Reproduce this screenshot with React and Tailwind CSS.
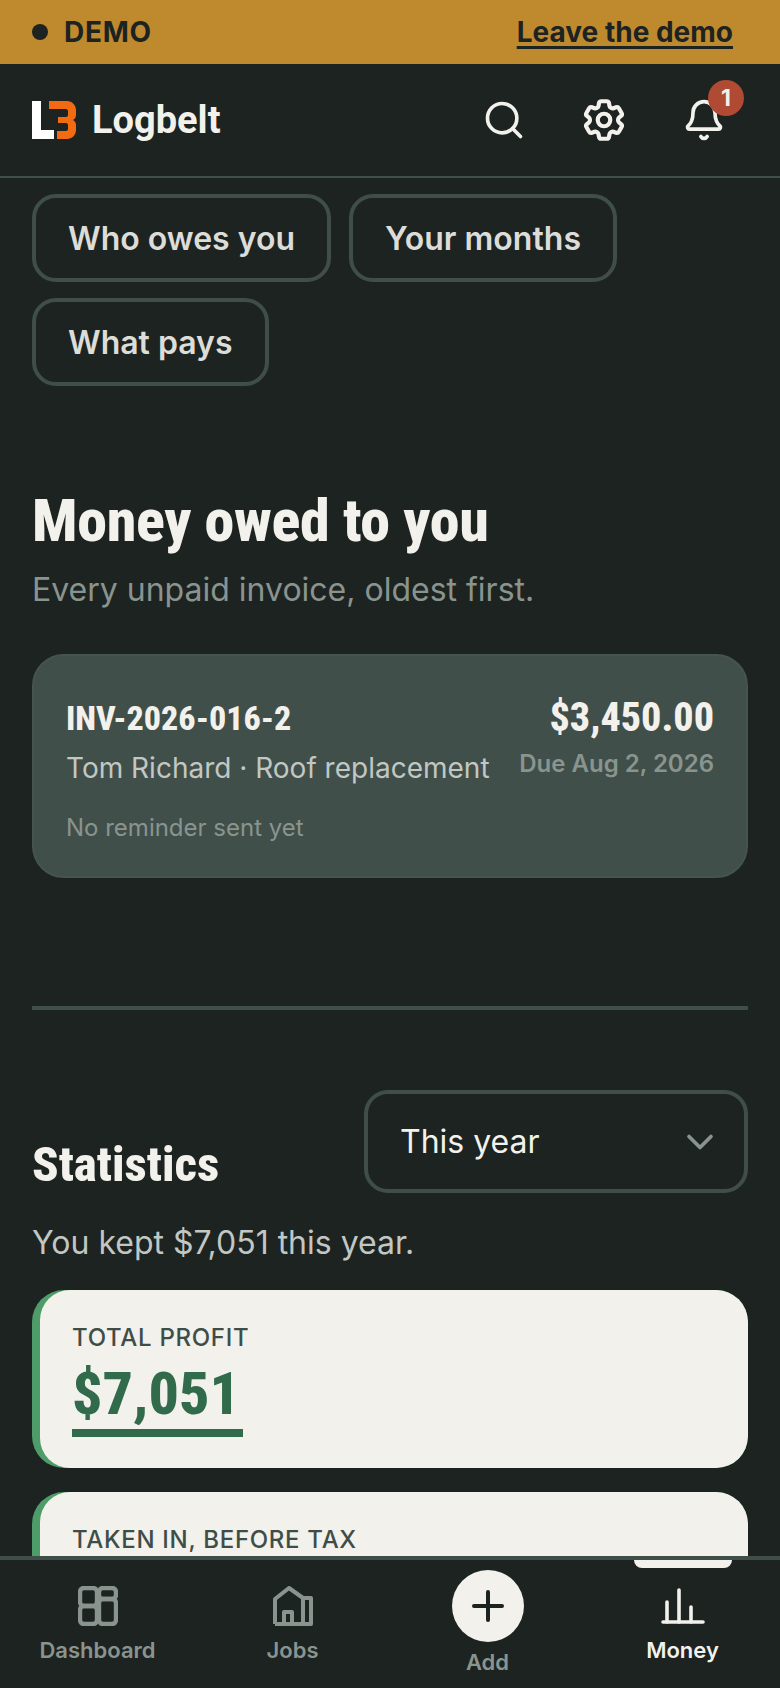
import React from "react";
import { Search, Bell, Plus, ChevronDown } from "lucide-react";
import { HiOutlineCog6Tooth } from "react-icons/hi2";

const head = { fontFamily: "Roboto, 'Liberation Sans', sans-serif", fontStretch: "85%" };

function Logo() {
  return (
    <svg width="44" height="38" viewBox="0 0 44 38" aria-hidden="true">
      <path d="M0 0h9v29h13v9H0z" fill="#fff" />
      <path d="M17 0h18c5 0 9 4 9 9v5c0 2-1 4-3 5 2 1 3 3 3 5v5c0 5-4 9-9 9H25v-8h9c1 0 2-1 2-2v-4c0-1-1-2-2-2h-8v-6h8c1 0 2-1 2-2V10c0-1-1-2-2-2H17z" fill="#f26a12" />
    </svg>
  );
}

function Chip({ children }) {
  return (
    <div className="h-[88px] px-[32px] pt-[2px] flex items-center rounded-[24px] border-4 border-[#3f4e49] text-[32px] font-semibold text-[#dcdcd8]">
      {children}
    </div>
  );
}

function DashIcon() {
  return (
    <svg width="40" height="40" viewBox="0 0 40 40" fill="none" stroke="#8a948f" strokeWidth="4.4" aria-hidden="true">
      <rect x="2" y="2" width="17" height="18" rx="4" />
      <rect x="21" y="2" width="17" height="11" rx="4" />
      <rect x="2" y="20" width="17" height="18" rx="4" />
      <rect x="21" y="13" width="17" height="25" rx="4" />
    </svg>
  );
}

function JobsIcon() {
  return (
    <svg width="40" height="40" viewBox="0 0 40 40" fill="none" stroke="#8a948f" strokeWidth="4" strokeLinejoin="round" aria-hidden="true">
      <path d="M2 38V13L16 2l14 10" />
      <path d="M2 38h36V12h-8v26" />
      <path d="M11 38V26h8v12" />
    </svg>
  );
}

function MoneyIcon() {
  return (
    <svg width="44" height="36" viewBox="0 0 44 36" fill="none" stroke="#f2f1ec" strokeWidth="3.6" strokeLinecap="round" aria-hidden="true">
      <path d="M2 34h40" />
      <path d="M6 14v20M18 2v32M30 19v15" />
    </svg>
  );
}

function NavItem({ icon, label, active }) {
  return (
    <div className="relative flex-1 flex flex-col items-center pt-[26px]">
      {active && <div className="absolute top-0 w-[98px] h-[8px] bg-[#f2f1ec] rounded-b-[10px]" />}
      <div className="h-[40px] flex items-center justify-center">{icon}</div>
      <div className={`mt-[8px] text-[22px] leading-[32px] font-semibold ${active ? "text-[#f2f1ec]" : "text-[#8a948f]"}`}>{label}</div>
    </div>
  );
}

function Stat({ label, children }) {
  return (
    <div className="rounded-[32px] bg-[#4f9c6b] pl-[8px] overflow-hidden">
      <div className="bg-[#f2f1ec] rounded-[30px] pl-[32px] pt-[32px] pb-[31px]">
        <div className="text-[24px] leading-[32px] font-medium tracking-[0.7px] text-[#3f4d48]">{label}</div>
        {children}
      </div>
    </div>
  );
}

export default function App() {
  return (
    <div className="w-[780px] h-[1688px] flex flex-col overflow-hidden bg-[#1d2321] text-[#f2f1ec]" style={{ fontFamily: "Inter, sans-serif" }}>
      <div className="h-[64px] shrink-0 bg-[#bf8a2e] pl-[32px] pr-[47px] flex items-center justify-between text-[#1d2321]">
        <div className="flex items-center gap-[16px] text-[28px] font-bold tracking-[0.7px]">
          <span className="w-[16px] h-[16px] rounded-full bg-[#1d2321]" />
          DEMO
        </div>
        <div className="text-[28px] font-bold underline underline-offset-[4px] decoration-[3px]">Leave the demo</div>
      </div>

      <header className="h-[114px] shrink-0 border-b-2 border-[#3f4e49] pl-[32px] pr-[54px] flex items-center justify-between">
        <div className="flex items-center gap-[16px]">
          <Logo />
          <span className="text-[38px] font-bold text-[#f2f1ec]" style={{ ...head, fontStretch: "93%" }}>Logbelt</span>
        </div>
        <div className="flex items-center gap-[53px]">
          <Search size={44} strokeWidth={2} color="#f2f1ec" />
          <HiOutlineCog6Tooth size={50} strokeWidth={2} color="#f2f1ec" />
          <div className="relative">
            <Bell size={44} strokeWidth={2} color="#f2f1ec" />
            <div className="absolute -top-[18px] left-[26px] w-[36px] h-[36px] rounded-full bg-[#b04a32] flex items-center justify-center text-[23px] font-bold">1</div>
          </div>
        </div>
      </header>

      <main className="flex-1 min-h-0 overflow-hidden px-[32px] pt-[16px]">
        <div className="flex flex-wrap gap-x-[18px] gap-y-[16px]">
          <Chip>Who owes you</Chip>
          <Chip>Your months</Chip>
          <Chip>What pays</Chip>
        </div>

        <h1 className="mt-[103px] text-[60px] leading-[64px] font-extrabold tracking-[-0.3px] text-[#f2f1ec]" style={head}>Money owed to you</h1>
        <p className="mt-[15px] text-[32px] leading-[44px] text-[#8a948f]">Every unpaid invoice, oldest first.</p>

        <div className="mt-[42px] h-[224px] rounded-[32px] bg-[#414f4a] border-2 border-[#46544f] px-[32px] pt-[40px] flex flex-col">
          <div className="flex justify-between">
            <div>
              <div className="text-[34px] leading-[44px] font-extrabold" style={head}>INV-2026-016-2</div>
              <div className="mt-[8px] text-[28px] leading-[40px] text-[#c2c7c3]">Tom Richard · Roof replacement</div>
            </div>
            <div className="text-right">
              <div className="text-[40px] leading-[44px] font-extrabold" style={head}>$3,450.00</div>
              <div className="mt-[6px] text-[24px] leading-[36px] font-semibold text-[#8a948f]">Due Aug 2, 2026</div>
            </div>
          </div>
          <div className="mt-[24px] text-[24px] leading-[32px] text-[#8a948f]">No reminder sent yet</div>
        </div>

        <div className="mt-[128px] h-[4px] bg-[#3f4e49]" />

        <div className="mt-[80px] flex items-end justify-between">
          <h2 className="text-[49px] leading-[56px] font-extrabold" style={head}>Statistics</h2>
          <div className="w-[384px] h-[103px] rounded-[24px] border-4 border-[#3f4e49] pl-[32px] pr-[22px] flex items-center justify-between text-[32px] text-[#f2f1ec]">
            This year
            <ChevronDown size={44} strokeWidth={2} color="#8a948f" />
          </div>
        </div>
        <p className="mt-[28px] text-[32px] leading-[44px] text-[#c2c7c3]">You kept $7,051 this year.</p>

        <div className="mt-[25px] flex flex-col gap-[24px]">
          <Stat label="TOTAL PROFIT">
            <div className="inline-block mt-[6px] pr-[3px] pb-[1px] border-b-[8px] border-[#316b4b] text-[60px] leading-[68px] font-extrabold text-[#316b4b]" style={head}>$7,051</div>
          </Stat>
          <Stat label="TAKEN IN, BEFORE TAX">
            <div className="h-[90px]" />
          </Stat>
        </div>
      </main>

      <nav className="relative h-[132px] shrink-0 bg-[#1d2321] border-t-4 border-[#3f4e49] flex">
        <NavItem icon={<DashIcon />} label="Dashboard" />
        <NavItem icon={<JobsIcon />} label="Jobs" />
        <div className="flex-1 flex flex-col items-center pt-[10px]">
          <div className="w-[72px] h-[72px] rounded-full bg-[#f2f1ec] flex items-center justify-center">
            <Plus size={48} strokeWidth={2} color="#1d2321" />
          </div>
          <div className="mt-[4px] text-[22px] leading-[32px] font-semibold text-[#8a948f]">Add</div>
        </div>
        <NavItem icon={<MoneyIcon />} label="Money" active />
      </nav>
    </div>
  );
}
